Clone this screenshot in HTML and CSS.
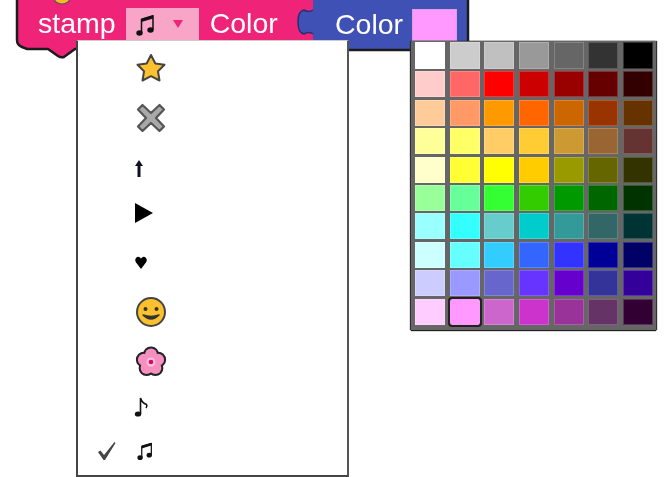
FILE: index.html
```html
<!DOCTYPE html>
<html lang="en">
<head>
    <meta charset="UTF-8">
    <title>Stamp block</title>
    <link rel="stylesheet" href="styles.css">
</head>
<body>

    <!-- Bloco stamp -->
    <div class="block">
        <svg class="block-shape" width="480" height="60" viewBox="0 0 480 60">
            <path d="M17 -3V40Q17 45 22 47L27 49H48L58 56Q61 58 64 57L75 49H320V-3Z" fill="#ef2378" stroke="#1c1c1c" stroke-width="2.500"/>
            <path d="M52 -3L56 2Q62 6 68 2L72 -3Z" fill="#f9b72c" stroke="#555" stroke-width="1.200"/>
            <path d="M313 -3V10Q309 13 304 10Q298 11 298 22Q298 33 304 34Q309 31 313 34V49H467V-3Z" fill="#3f51b5"/>
            <path d="M313 10Q309 13 304 10Q298 11 298 22Q298 33 304 34Q309 31 313 34" fill="none" stroke="#26306e" stroke-width="1.500"/>
            <path d="M468 -3V50H313" fill="none" stroke="#1c1c1c" stroke-width="2.500"/>
        </svg>
        <span class="label">stamp</span>
        <div class="dropdown">
            <svg width="20" height="24" viewBox="0 0 20 24">
                <path d="M5.500 20V6.500L17 3V16.500" fill="none" stroke="#111" stroke-width="1.500"/>
                <path d="M5.500 5.500L17 2V5.500L5.500 9Z" fill="#111"/>
                <ellipse cx="3.500" cy="20" rx="3.200" ry="2.800" fill="#111"/>
                <ellipse cx="14.500" cy="17" rx="3.200" ry="2.800" fill="#111"/>
            </svg>
            <span class="arrow"></span>
        </div>
        <span class="label label-color">Color</span>
        <div class="value-block">
            <span class="label">Color</span>
            <span class="swatch"></span>
        </div>
    </div>

    <!-- Menu de icones -->
    <div class="menu">
        <div class="item">
            <svg width="32" height="32" viewBox="0 0 32 32"><path d="M16 3L20.300 11.500L29.500 12.800L23 19.300L24.500 28.500L16 24.200L7.500 28.500L9 19.300L2.500 12.800L11.700 11.500Z" fill="#fdc02f" stroke="#444" stroke-width="2" stroke-linejoin="round"/></svg>
        </div>
        <div class="item">
            <svg width="32" height="32" viewBox="0 0 32 32"><path d="M7.500 3L16 11L24.500 3L29 7.500L21 16L29 24.500L24.500 29L16 21L7.500 29L3 24.500L11 16L3 7.500Z" fill="#a9a9a9" stroke="#555" stroke-width="2.200" stroke-linejoin="round"/></svg>
        </div>
        <div class="item item-small item-arrow">
            <svg width="10" height="20" viewBox="0 0 10 20"><path d="M5 1L9 7H6.500V18H3.500V7H1Z" fill="#101020"/></svg>
        </div>
        <div class="item item-small item-play">
            <svg width="20" height="24" viewBox="0 0 20 24"><path d="M1 2L19 12L1 22Z" fill="#000"/></svg>
        </div>
        <div class="item item-small item-heart">
            <svg width="14" height="15" viewBox="0 0 15 17"><path d="M7.500 16L1.500 8Q0 5 2 3Q5 0.500 7.500 4Q10 0.500 13 3Q15 5 13.500 8Z" fill="#000"/></svg>
        </div>
        <div class="item">
            <svg width="32" height="32" viewBox="0 0 32 32">
                <circle cx="16" cy="16" r="14" fill="#fbc02d" stroke="#444" stroke-width="2"/>
                <circle cx="10.500" cy="13" r="2" fill="#333"/>
                <circle cx="21.500" cy="13" r="2" fill="#333"/>
                <path d="M8 19Q16 27 24 19Q16 22 8 19Z" fill="#333" stroke="#333" stroke-width="1.500" stroke-linejoin="round"/>
            </svg>
        </div>
        <div class="item">
            <svg width="32" height="32" viewBox="0 0 32 32">
                <g fill="#222" stroke="#222" stroke-width="4">
                    <circle cx="16" cy="8.500" r="6"/>
                    <circle cx="23.100" cy="13.700" r="6"/>
                    <circle cx="20.400" cy="22.100" r="6"/>
                    <circle cx="11.600" cy="22.100" r="6"/>
                    <circle cx="8.900" cy="13.700" r="6"/>
                </g>
                <g fill="#f78fc0">
                    <circle cx="16" cy="8.500" r="6"/>
                    <circle cx="23.100" cy="13.700" r="6"/>
                    <circle cx="20.400" cy="22.100" r="6"/>
                    <circle cx="11.600" cy="22.100" r="6"/>
                    <circle cx="8.900" cy="13.700" r="6"/>
                </g>
                <circle cx="16" cy="16" r="4.500" fill="#fbc4dc"/>
                <circle cx="16" cy="16" r="2.300" fill="#e6006e"/>
            </svg>
        </div>
        <div class="item item-small item-note">
            <svg width="16" height="22" viewBox="0 0 16 22"><path d="M6.500 18V2Q8 7 12.500 8.500Q13.500 10 12 12" fill="none" stroke="#111" stroke-width="1.600"/><ellipse cx="4" cy="18" rx="3.200" ry="2.600" fill="#111"/></svg>
        </div>
        <div class="item item-small item-checked">
            <svg class="check" width="20" height="20" viewBox="0 0 20 20"><path d="M1 11L3.500 9.500L7 14L17.500 1L18.500 2L8 19H6.500Z" fill="#444"/></svg>
            <svg class="item-note-icon" width="17" height="20" viewBox="0 0 20 24">
                <path d="M5.500 20V6.500L17 3V16.500" fill="none" stroke="#111" stroke-width="1.500"/>
                <path d="M5.500 5.500L17 2V5.500L5.500 9Z" fill="#111"/>
                <ellipse cx="3.500" cy="20" rx="3.200" ry="2.800" fill="#111"/>
                <ellipse cx="14.500" cy="17" rx="3.200" ry="2.800" fill="#111"/>
            </svg>
        </div>
    </div>

    <!-- Paleta de cores -->
    <div class="palette" id="palette"></div>

    <script>
        let cores = [
            "#ffffff", "#cccccc", "#c0c0c0", "#999999", "#666666", "#333333", "#000000",
            "#ffcccc", "#ff6666", "#ff0000", "#cc0000", "#990000", "#660000", "#330000",
            "#ffcc99", "#ff9966", "#ff9900", "#ff6600", "#cc6600", "#993300", "#663300",
            "#ffff99", "#ffff66", "#ffcc66", "#ffcc33", "#cc9933", "#996633", "#663333",
            "#ffffcc", "#ffff33", "#ffff00", "#ffcc00", "#999900", "#666600", "#333300",
            "#99ff99", "#66ff99", "#33ff33", "#33cc00", "#009900", "#006600", "#003300",
            "#99ffff", "#33ffff", "#66cccc", "#00cccc", "#339999", "#336666", "#003333",
            "#ccffff", "#66ffff", "#33ccff", "#3366ff", "#3333ff", "#000099", "#000066",
            "#ccccff", "#9999ff", "#6666cc", "#6633ff", "#6600cc", "#333399", "#330099",
            "#ffccff", "#ff99ff", "#cc66cc", "#cc33cc", "#993399", "#663366", "#330033"
        ];

        let paleta = document.getElementById('palette');
        cores.forEach(cor => {
            let celula = document.createElement('div');
            celula.className = cor === "#ff99ff" ? 'cell cell-selected' : 'cell';
            celula.style.backgroundColor = cor;
            paleta.appendChild(celula);
        });
    </script>

</body>
</html>
```

FILE: styles.css
```css
body {
    margin: 0;
    width: 667px;
    height: 477px;
    overflow: hidden;
    background-color: #fff;
    font-family: "Liberation Sans", Arial, sans-serif;
    position: relative;
    filter: blur(0.4px);
}
.block {
    position: relative;
    display: flex;
    align-items: center;
    width: 469px;
    height: 48px;
    box-sizing: border-box;
    padding: 0 0 1px 38px;
}
.block-shape {
    position: absolute;
    left: 0;
    top: 0;
}
.label {
    position: relative;
    font-size: 28.500px;
    color: #fff;
}
.label-color {
    margin-left: 11px;
}
.dropdown {
    position: relative;
    display: flex;
    align-items: center;
    box-sizing: border-box;
    width: 73px;
    height: 34px;
    margin: 2px 0 0 10px;
    padding-left: 10px;
    background-color: #f8a5c8;
}
.arrow {
    margin-left: 17px;
    margin-bottom: 2px;
    border-left: 5px solid transparent;
    border-right: 5px solid transparent;
    border-top: 8px solid #ef2378;
}
.value-block {
    position: absolute;
    left: 313px;
    top: -2px;
    display: flex;
    align-items: center;
    box-sizing: border-box;
    width: 156px;
    height: 51px;
    padding: 2px 0 0 22px;
}
.swatch {
    position: relative;
    width: 45px;
    height: 32px;
    margin-left: 9px;
    background-color: #ff99ff;
    border: 1px solid #d9a0e0;
    box-sizing: border-box;
}
.menu {
    position: absolute;
    left: 76px;
    top: 40px;
    box-sizing: border-box;
    width: 273px;
    height: 437px;
    padding-top: 2px;
    display: flex;
    flex-direction: column;
    background-color: #fff;
    border-top: 1px solid #ccc;
    border-left: 2px solid #444;
    border-right: 2px solid #555;
    border-bottom: 2px solid #444;
}
.item {
    position: relative;
    display: flex;
    align-items: center;
    flex: none;
    height: 50px;
    padding-left: 57px;
}
.item-small {
    height: 48px;
    padding-left: 56px;
}
.item-arrow svg {
    margin-top: 4px;
}
.item-play svg {
    margin-bottom: 4px;
}
.item-heart svg {
    margin-bottom: 2px;
}
.item-note {
    height: 40px;
}
.item-note-icon {
    margin-left: 3px;
}
.check {
    position: absolute;
    left: 19px;
}
.palette {
    position: absolute;
    left: 411px;
    top: 41px;
    box-sizing: border-box;
    width: 245px;
    height: 289px;
    padding: 1px 0 0 4px;
    display: grid;
    grid-template-columns: repeat(7, 30px);
    grid-template-rows: 27px repeat(9, 26px);
    row-gap: 2.400px;
    column-gap: 4.670px;
    background-color: #666;
    box-shadow: 0 1px 1px #222, 1px 0 1px #333, -1px 0 1px #333;
}
.cell {
    box-sizing: border-box;
    border: 1px solid rgba(255, 255, 255, 0.2);
}
.cell-selected {
    border: 0;
    border-radius: 2px;
    outline: 2px solid #222;
}
```
